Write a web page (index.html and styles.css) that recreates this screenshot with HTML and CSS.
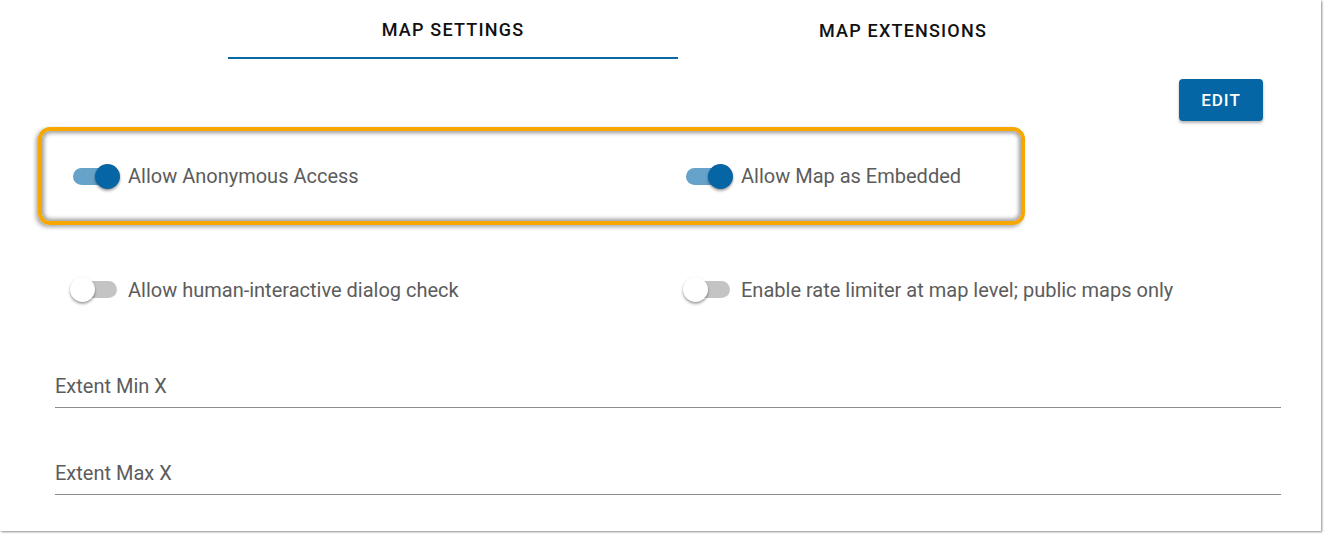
FILE: index.html
```html
<!DOCTYPE html>
<html>
<head>
<meta charset="utf-8">
<link rel="stylesheet" href="styles.css">
</head>
<body>
<div class="panel">
  <div class="tabs">
    <div class="tab active">MAP SETTINGS</div>
    <div class="tab">MAP EXTENSIONS</div>
  </div>
  <div class="toolbar">
    <button class="btn">EDIT</button>
  </div>
  <div class="highlight">
    <div class="row">
      <label class="opt"><span class="switch on"><span class="track"></span><span class="thumb"></span></span><span class="lbl">Allow Anonymous Access</span></label>
      <label class="opt"><span class="switch on"><span class="track"></span><span class="thumb"></span></span><span class="lbl">Allow Map as Embedded</span></label>
    </div>
  </div>
  <div class="row row2">
    <label class="opt"><span class="switch"><span class="track"></span><span class="thumb"></span></span><span class="lbl">Allow human-interactive dialog check</span></label>
    <label class="opt"><span class="switch"><span class="track"></span><span class="thumb"></span></span><span class="lbl">Enable rate limiter at map level; public maps only</span></label>
  </div>
  <div class="fields">
    <div class="field"><span class="flabel">Extent Min X</span></div>
    <div class="field"><span class="flabel">Extent Max X</span></div>
  </div>
</div>
</body>
</html>
```

FILE: styles.css
```css
html, body {
  margin: 0;
  padding: 0;
  background: #ffffff;
}
body {
  font-family: Roboto, "Liberation Sans", sans-serif;
  width: 1327px;
  height: 538px;
  overflow: hidden;
}
.panel {
  width: 1321px;
  height: 531px;
  background: #fff;
  box-shadow: 1px 1px 2px rgba(0,0,0,0.45);
  display: flex;
  flex-direction: column;
  box-sizing: border-box;
}
.tabs {
  display: flex;
  padding-left: 228px;
}
.tab {
  width: 450px;
  height: 59px;
  box-sizing: border-box;
  display: flex;
  align-items: center;
  justify-content: center;
  padding-top: 2px;
  font-size: 18px;
  font-weight: 500;
  letter-spacing: 1.2px;
  color: #111;
}
.tab.active {
  border-bottom: 2px solid #0a67a5;
}
.toolbar {
  display: flex;
  justify-content: flex-end;
  padding-right: 58px;
  margin-top: 20px;
}
.btn {
  width: 84px;
  height: 42px;
  border: 0;
  border-radius: 4px;
  background: #0466a5;
  color: #fff;
  font-family: Roboto, "Liberation Sans", sans-serif;
  font-size: 17px;
  font-weight: 500;
  letter-spacing: 1px;
  box-shadow: 0 2px 3px rgba(0,0,0,0.3);
  padding: 0;
}
.highlight {
  margin-top: 6px;
  margin-left: 38px;
  width: 987px;
  height: 98px;
  box-sizing: border-box;
  border: 4px solid #f6a700;
  border-radius: 12px;
  box-shadow: inset 0 0 4px 2px rgba(0,0,0,0.4), -2px 2px 4px rgba(0,0,0,0.35);
  display: flex;
  align-items: center;
  padding-left: 28px;
}
.row {
  display: grid;
  grid-template-columns: 613px auto;
  align-items: center;
}
.row2 {
  margin-top: 52px;
  padding-left: 70px;
}
.opt {
  display: flex;
  align-items: center;
}
.switch {
  position: relative;
  width: 50px;
  height: 25px;
  flex: none;
}
.track {
  position: absolute;
  left: 3px;
  top: 4px;
  width: 44px;
  height: 17px;
  border-radius: 9px;
  background: #c4c4c4;
}
.thumb {
  position: absolute;
  left: 0;
  top: 0;
  width: 25px;
  height: 25px;
  border-radius: 50%;
  background: #fff;
  box-shadow: 0 2px 3px rgba(0,0,0,0.3), 0 1px 2px rgba(0,0,0,0.15);
}
.switch.on .track {
  background: #66a2c9;
}
.switch.on .thumb {
  left: 25px;
  background: #0665a5;
}
.lbl {
  margin-left: 8px;
  font-size: 20px;
  color: #5c5c5c;
}
.fields {
  margin-top: 73px;
  margin-left: 55px;
  width: 1226px;
  display: flex;
  flex-direction: column;
  gap: 54px;
}
.field {
  border-bottom: 1px solid #8c8c8c;
  height: 32px;
  display: flex;
  align-items: flex-start;
}
.flabel {
  font-size: 20px;
  color: #5c5c5c;
  line-height: 22px;
}
```
